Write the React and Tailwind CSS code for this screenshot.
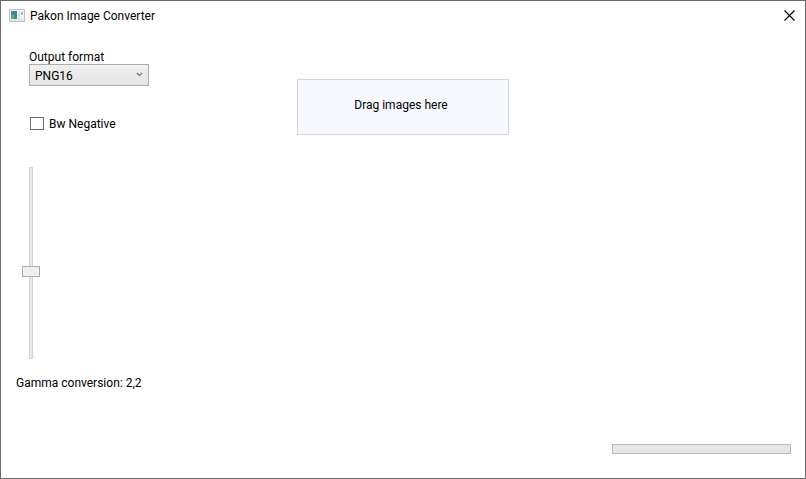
import { useState } from "react";

function AppIcon() {
  return (
    <svg className="mb-px h-[13px] w-4" viewBox="0 0 16 13" aria-hidden="true">
      <rect x="0.5" y="0.5" width="15" height="12" fill="#f1f4f6" stroke="#bcc4ca" />
      <rect x="2" y="2" width="6" height="8" fill="#458b83" />
      <rect x="2" y="6" width="3" height="4" fill="#62a39b" />
      <rect x="9" y="2" width="2" height="8" fill="#d5e2ea" />
      <rect x="12" y="3" width="2" height="3" fill="#9fb7c8" />
      <rect x="1" y="10" width="14" height="2" fill="#e2e7ea" />
    </svg>
  );
}

function TitleBar() {
  return (
    <header className="flex h-[30px] items-center justify-between pl-2">
      <div className="flex items-center gap-[5px]">
        <AppIcon />
        <h1>Pakon Image Converter</h1>
      </div>
      <button type="button" aria-label="Close" className="flex h-[30px] w-[31px] items-center justify-center pb-px">
        <svg className="h-[11px] w-[11px]" viewBox="0 0 11 11" aria-hidden="true">
          <path d="M0.5 0.5L10.5 10.5M10.5 0.5L0.5 10.5" fill="none" stroke="#000" strokeWidth="1.1" />
        </svg>
      </button>
    </header>
  );
}

function FormatSelect() {
  return (
    <div className="ml-[13px] flex flex-col items-start">
      <label htmlFor="format" className="leading-[14px]">Output format</label>
      <div className="relative w-[120px]">
        <select
          id="format"
          defaultValue="PNG16"
          className="block h-[22px] w-full appearance-none border border-[#acacac] bg-linear-to-b from-[#f0f0f0] to-[#e5e5e5] pt-px pl-[5px]"
        >
          <option>PNG16</option>
          <option>PNG8</option>
          <option>JPEG</option>
        </select>
        <svg className="pointer-events-none absolute top-2 right-1.5 h-[5px] w-[7px]" viewBox="0 0 7 5" aria-hidden="true">
          <path d="M0.8 0.8L3.5 3.5L6.2 0.8" fill="none" stroke="#707070" strokeWidth="1.2" />
        </svg>
      </div>
    </div>
  );
}

export default function App() {
  const [gamma, setGamma] = useState(2.2);

  return (
    <div className="flex min-h-screen flex-col border border-[#6b6b6b] bg-white font-['Segoe_UI','Roboto',sans-serif] text-[12px] leading-4 text-black">
      <TitleBar />
      <main className="grid grow grid-cols-[1fr_212px_1fr] pt-[19px]">
        <section className="flex flex-col items-start pl-[15px]">
          <FormatSelect />
          <label className="mt-[30px] ml-3.5 flex items-center gap-[5px]">
            <input
              type="checkbox"
              className="mb-px h-[13px] w-3.5 appearance-none border border-[#707070] bg-white checked:bg-[#707070]"
            />
            Bw Negative
          </label>
          <input
            id="gamma"
            type="range"
            min="0.4"
            max="4.4"
            step="0.1"
            value={gamma}
            onChange={(e) => setGamma(Number(e.target.value))}
            className="mt-[35px] ml-1.5 h-48 w-[18px] appearance-none bg-transparent [direction:rtl] [writing-mode:vertical-lr] [&::-webkit-slider-runnable-track]:w-1 [&::-webkit-slider-runnable-track]:border [&::-webkit-slider-runnable-track]:border-[#d6d6d6] [&::-webkit-slider-runnable-track]:bg-[#e7eaea] [&::-webkit-slider-thumb]:-ml-2 [&::-webkit-slider-thumb]:h-[11px] [&::-webkit-slider-thumb]:w-[18px] [&::-webkit-slider-thumb]:appearance-none [&::-webkit-slider-thumb]:border [&::-webkit-slider-thumb]:border-[#acacac] [&::-webkit-slider-thumb]:bg-[#f0f0f0]"
          />
          <label htmlFor="gamma" className="mt-4">
            Gamma conversion: {gamma.toFixed(1).replace(".", ",")}
          </label>
        </section>
        <section className="mt-[29px] flex h-14 justify-center border border-[#d6d7de] bg-[#f8f8ff] pt-[17px]">
          <p className="pr-1">Drag images here</p>
        </section>
      </main>
      <footer className="flex justify-end pr-3.5 pb-6">
        <progress
          aria-label="Conversion progress"
          value="0"
          max="100"
          className="block h-2.5 w-[179px] appearance-none border border-[#bcbcbc] bg-[#e6e6e6] [&::-webkit-progress-bar]:bg-[#e6e6e6] [&::-webkit-progress-value]:bg-[#06b025]"
        />
      </footer>
    </div>
  );
}
